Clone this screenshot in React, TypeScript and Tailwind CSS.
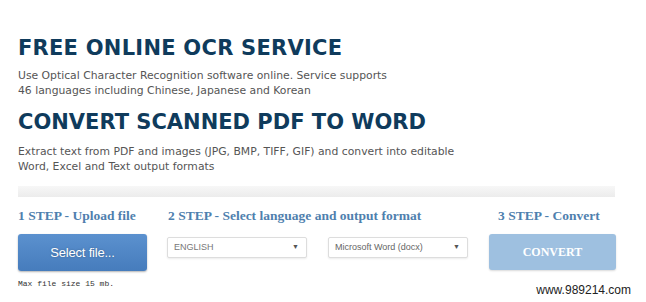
export default function App() {
  return (
    <div className="relative h-[302px] w-[646px] overflow-hidden bg-white">
      <div className="flex flex-col px-[18px] pt-[36px]">
        <h1 className="font-['DejaVu_Sans',sans-serif] text-[21px] font-bold leading-[25px] tracking-[0.25px] text-[#0f3b5c]">
          FREE ONLINE OCR SERVICE
        </h1>
        <p className="mt-[7px] font-['DejaVu_Sans',sans-serif] text-[10.8px] leading-[15px] text-[#555]">
          Use Optical Character Recognition software online. Service supports
          <br />
          46 languages including Chinese, Japanese and Korean
        </p>
        <h2 className="mt-[12px] font-['DejaVu_Sans',sans-serif] text-[21px] font-bold leading-[25px] tracking-[0px] text-[#0f3b5c]">
          CONVERT SCANNED PDF TO WORD
        </h2>
        <p className="mt-[9px] font-['DejaVu_Sans',sans-serif] text-[10.8px] leading-[15px] text-[#555]">
          Extract text from PDF and images (JPG, BMP, TIFF, GIF) and convert into editable
          <br />
          Word, Excel and Text output formats
        </p>
        <div className="mt-[12px] h-[11px] w-[597px] bg-gradient-to-b from-[#f7f7f7] to-[#ececec]" />

        <div className="mt-[11px] flex font-['Liberation_Serif',serif] text-[13.5px] font-bold leading-[16px] text-[#4f7fae]">
          <div className="w-[150px]">1 STEP - Upload file</div>
          <div className="w-[330px]">2 STEP - Select language and output format</div>
          <div>3 STEP - Convert</div>
        </div>

        <div className="mt-[10px] flex items-start">
          <button className="h-[37px] w-[129px] rounded-[3px] bg-gradient-to-b from-[#5b91cf] to-[#467cbc] font-['Liberation_Sans',sans-serif] text-[13px] tracking-[-0.2px] text-white shadow-[0_1px_2px_rgba(0,0,0,0.3)] [text-shadow:0_0_2px_rgba(0,0,0,0.3)]">
            Select file...
          </button>
          <div className="ml-[20px] mt-[3px] flex h-[21px] w-[140px] items-center justify-between rounded-[2px] border border-[#ddd] bg-white pl-[6px] pr-[7px] font-['Liberation_Sans',sans-serif] text-[9px] text-[#777] shadow-[0_1px_2px_rgba(0,0,0,0.08)]">
            <span>ENGLISH</span>
            <span className="text-[7px] text-[#555]">▼</span>
          </div>
          <div className="ml-[21px] mt-[3px] flex h-[21px] w-[140px] items-center justify-between rounded-[2px] border border-[#ddd] bg-white pl-[6px] pr-[7px] font-['Liberation_Sans',sans-serif] text-[9px] text-[#666] shadow-[0_1px_2px_rgba(0,0,0,0.08)]">
            <span>Microsoft Word (docx)</span>
            <span className="text-[7px] text-[#555]">▼</span>
          </div>
          <button className="ml-[21px] h-[36px] w-[127px] rounded-[3px] bg-[#9ec0e0] font-['Liberation_Serif',serif] text-[12px] font-bold text-white shadow-[0_1px_2px_rgba(0,0,0,0.15)]">
            CONVERT
          </button>
        </div>

        <div className="mt-[8px] font-['Liberation_Mono',monospace] text-[8px] leading-[10px] text-[#333]">
          Max file size 15 mb.
        </div>
      </div>
      <div className="absolute bottom-[3px] right-[15px] font-['Liberation_Sans',sans-serif] text-[12px] text-[#222]">
        www.989214.com
      </div>
    </div>
  );
}
